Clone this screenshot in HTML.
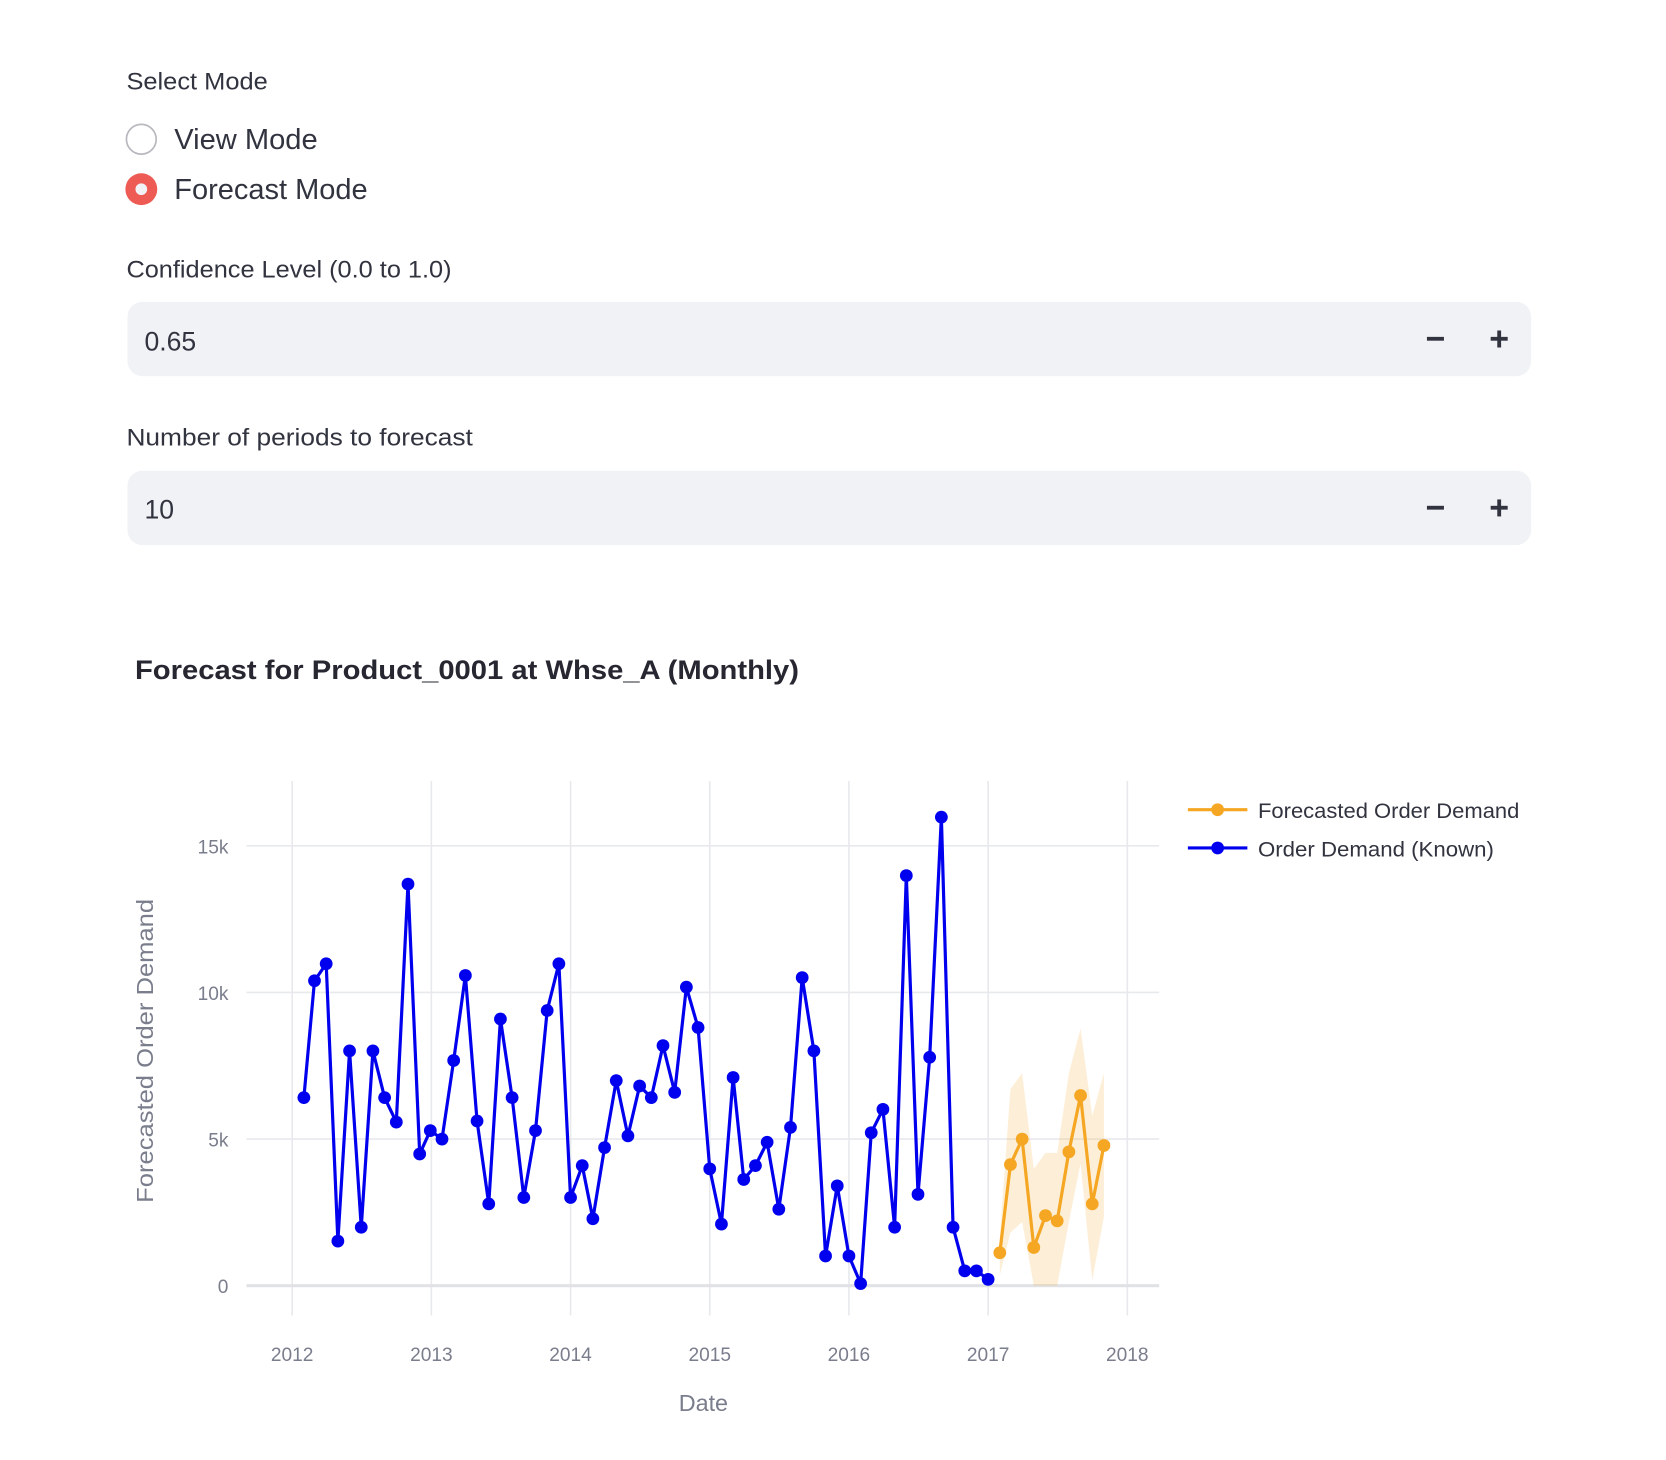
<!DOCTYPE html>
<html><head><meta charset="utf-8"><style>
html,body{margin:0;padding:0;background:#fff;width:1666px;height:1460px;overflow:hidden}
svg{display:block}
text{font-family:"Liberation Sans",sans-serif}
</style></head><body>
<svg width="1666" height="1460" viewBox="0 0 1568 1374" xmlns="http://www.w3.org/2000/svg">
<text x="119" y="84" font-size="23" fill="#31333f" textLength="133" lengthAdjust="spacingAndGlyphs">Select Mode</text>
<circle cx="133" cy="131" r="14" fill="#fff" stroke="#b8b9bf" stroke-width="1.6"/>
<text x="164" y="140" font-size="27" fill="#31333f" textLength="135" lengthAdjust="spacingAndGlyphs">View Mode</text>
<circle cx="133" cy="178" r="15" fill="#ee5b54"/>
<circle cx="133" cy="178" r="5.5" fill="#f0f2f6"/>
<text x="164" y="187" font-size="27" fill="#31333f" textLength="182" lengthAdjust="spacingAndGlyphs">Forecast Mode</text>
<text x="119" y="261" font-size="23" fill="#31333f" textLength="306" lengthAdjust="spacingAndGlyphs">Confidence Level (0.0 to 1.0)</text>
<rect x="120" y="284" width="1321" height="70" rx="14" fill="#f0f2f6"/>
<text x="136" y="330" font-size="25" fill="#31333f">0.65</text>
<rect x="1343" y="317" width="16" height="3.6" fill="#31333f"/>
<rect x="1403" y="317" width="16" height="3.6" fill="#31333f"/>
<rect x="1409.2" y="311" width="3.6" height="16" fill="#31333f"/>
<text x="119" y="419" font-size="23" fill="#31333f" textLength="326" lengthAdjust="spacingAndGlyphs">Number of periods to forecast</text>
<rect x="120" y="443" width="1321" height="70" rx="14" fill="#f0f2f6"/>
<text x="136" y="488" font-size="25" fill="#31333f">10</text>
<rect x="1343" y="476" width="16" height="3.6" fill="#31333f"/>
<rect x="1403" y="476" width="16" height="3.6" fill="#31333f"/>
<rect x="1409.2" y="470" width="3.6" height="16" fill="#31333f"/>
<text x="127" y="639" font-size="25" font-weight="bold" fill="#262730" textLength="625" lengthAdjust="spacingAndGlyphs">Forecast for Product_0001 at Whse_A (Monthly)</text>

<g stroke="#e8e9ed" stroke-width="1.5">
<line x1="275" y1="735" x2="275" y2="1238"/><line x1="406" y1="735" x2="406" y2="1238"/>
<line x1="537" y1="735" x2="537" y2="1238"/><line x1="668" y1="735" x2="668" y2="1238"/>
<line x1="799" y1="735" x2="799" y2="1238"/><line x1="930" y1="735" x2="930" y2="1238"/>
<line x1="1061" y1="735" x2="1061" y2="1238"/>
<line x1="232" y1="796" x2="1091" y2="796"/><line x1="232" y1="934" x2="1091" y2="934"/>
<line x1="232" y1="1072" x2="1091" y2="1072"/>
</g>
<line x1="232" y1="1210" x2="1091" y2="1210" stroke="#e1e2e6" stroke-width="3"/>
<g font-size="18" fill="#7a7d8c" text-anchor="end">
<text x="215" y="803">15k</text><text x="215" y="941">10k</text><text x="215" y="1079">5k</text><text x="215" y="1217">0</text>
</g>
<g font-size="18" fill="#7a7d8c" text-anchor="middle">
<text x="275" y="1281">2012</text><text x="406" y="1281">2013</text><text x="537" y="1281">2014</text>
<text x="668" y="1281">2015</text><text x="799" y="1281">2016</text><text x="930" y="1281">2017</text><text x="1061" y="1281">2018</text>
<text x="662" y="1328" font-size="22">Date</text>
<text transform="translate(144,989) rotate(-90)" font-size="22" textLength="286" lengthAdjust="spacingAndGlyphs">Forecasted Order Demand</text>
</g>
<polygon fill="#f5a623" fill-opacity="0.18" points="941,1165 951,1025 962,1010 973,1100 984,1085 995,1085 1006,1010 1017,968 1028,1050 1039,1010 1039,1145 1028,1205 1017,1095 1006,1150 995,1210 984,1210 973,1210 962,1150 951,1160 941,1200"/>
<polyline fill="none" stroke="#0000ee" stroke-width="3" stroke-linejoin="round" points="286,1033 296,923 307,907 318,1168 329,989 340,1155 351,989 362,1033 373,1056 384,832 395,1086 405,1064 416,1072 427,998 438,918 449,1055 460,1133 471,959 482,1033 493,1127 504,1064 515,951 526,907 537,1127 548,1097 558,1147 569,1080 580,1017 591,1069 602,1022 613,1033 624,984 635,1028 646,929 657,967 668,1100 679,1152 690,1014 700,1110 711,1097 722,1075 733,1138 744,1061 755,920 766,989 777,1182 788,1116 799,1182 810,1208 820,1066 831,1044 842,1155 853,824 864,1124 875,995 886,769 897,1155 908,1196 919,1196 930,1204"/>
<g fill="#0000ee">
<circle cx="286" cy="1033" r="6"/><circle cx="296" cy="923" r="6"/><circle cx="307" cy="907" r="6"/><circle cx="318" cy="1168" r="6"/><circle cx="329" cy="989" r="6"/><circle cx="340" cy="1155" r="6"/><circle cx="351" cy="989" r="6"/><circle cx="362" cy="1033" r="6"/><circle cx="373" cy="1056" r="6"/><circle cx="384" cy="832" r="6"/><circle cx="395" cy="1086" r="6"/><circle cx="405" cy="1064" r="6"/><circle cx="416" cy="1072" r="6"/><circle cx="427" cy="998" r="6"/><circle cx="438" cy="918" r="6"/><circle cx="449" cy="1055" r="6"/><circle cx="460" cy="1133" r="6"/><circle cx="471" cy="959" r="6"/><circle cx="482" cy="1033" r="6"/><circle cx="493" cy="1127" r="6"/><circle cx="504" cy="1064" r="6"/><circle cx="515" cy="951" r="6"/><circle cx="526" cy="907" r="6"/><circle cx="537" cy="1127" r="6"/><circle cx="548" cy="1097" r="6"/><circle cx="558" cy="1147" r="6"/><circle cx="569" cy="1080" r="6"/><circle cx="580" cy="1017" r="6"/><circle cx="591" cy="1069" r="6"/><circle cx="602" cy="1022" r="6"/><circle cx="613" cy="1033" r="6"/><circle cx="624" cy="984" r="6"/><circle cx="635" cy="1028" r="6"/><circle cx="646" cy="929" r="6"/><circle cx="657" cy="967" r="6"/><circle cx="668" cy="1100" r="6"/><circle cx="679" cy="1152" r="6"/><circle cx="690" cy="1014" r="6"/><circle cx="700" cy="1110" r="6"/><circle cx="711" cy="1097" r="6"/><circle cx="722" cy="1075" r="6"/><circle cx="733" cy="1138" r="6"/><circle cx="744" cy="1061" r="6"/><circle cx="755" cy="920" r="6"/><circle cx="766" cy="989" r="6"/><circle cx="777" cy="1182" r="6"/><circle cx="788" cy="1116" r="6"/><circle cx="799" cy="1182" r="6"/><circle cx="810" cy="1208" r="6"/><circle cx="820" cy="1066" r="6"/><circle cx="831" cy="1044" r="6"/><circle cx="842" cy="1155" r="6"/><circle cx="853" cy="824" r="6"/><circle cx="864" cy="1124" r="6"/><circle cx="875" cy="995" r="6"/><circle cx="886" cy="769" r="6"/><circle cx="897" cy="1155" r="6"/><circle cx="908" cy="1196" r="6"/><circle cx="919" cy="1196" r="6"/><circle cx="930" cy="1204" r="6"/>
</g>
<polyline fill="none" stroke="#f5a623" stroke-width="3" stroke-linejoin="round" points="941,1179 951,1096 962,1072 973,1174 984,1144 995,1149 1006,1084 1017,1031 1028,1133 1039,1078"/>
<g fill="#f5a623">
<circle cx="941" cy="1179" r="6"/><circle cx="951" cy="1096" r="6"/><circle cx="962" cy="1072" r="6"/><circle cx="973" cy="1174" r="6"/><circle cx="984" cy="1144" r="6"/><circle cx="995" cy="1149" r="6"/><circle cx="1006" cy="1084" r="6"/><circle cx="1017" cy="1031" r="6"/><circle cx="1028" cy="1133" r="6"/><circle cx="1039" cy="1078" r="6"/>
</g>
<line x1="1118" y1="762" x2="1174" y2="762" stroke="#f5a623" stroke-width="3"/><circle cx="1146" cy="762" r="6" fill="#f5a623"/>
<line x1="1118" y1="798" x2="1174" y2="798" stroke="#0000ee" stroke-width="3"/><circle cx="1146" cy="798" r="6" fill="#0000ee"/>
<text x="1184" y="770" font-size="20" fill="#31333f" textLength="246" lengthAdjust="spacingAndGlyphs">Forecasted Order Demand</text>
<text x="1184" y="806" font-size="20" fill="#31333f" textLength="222" lengthAdjust="spacingAndGlyphs">Order Demand (Known)</text>
</svg>
</body></html>
